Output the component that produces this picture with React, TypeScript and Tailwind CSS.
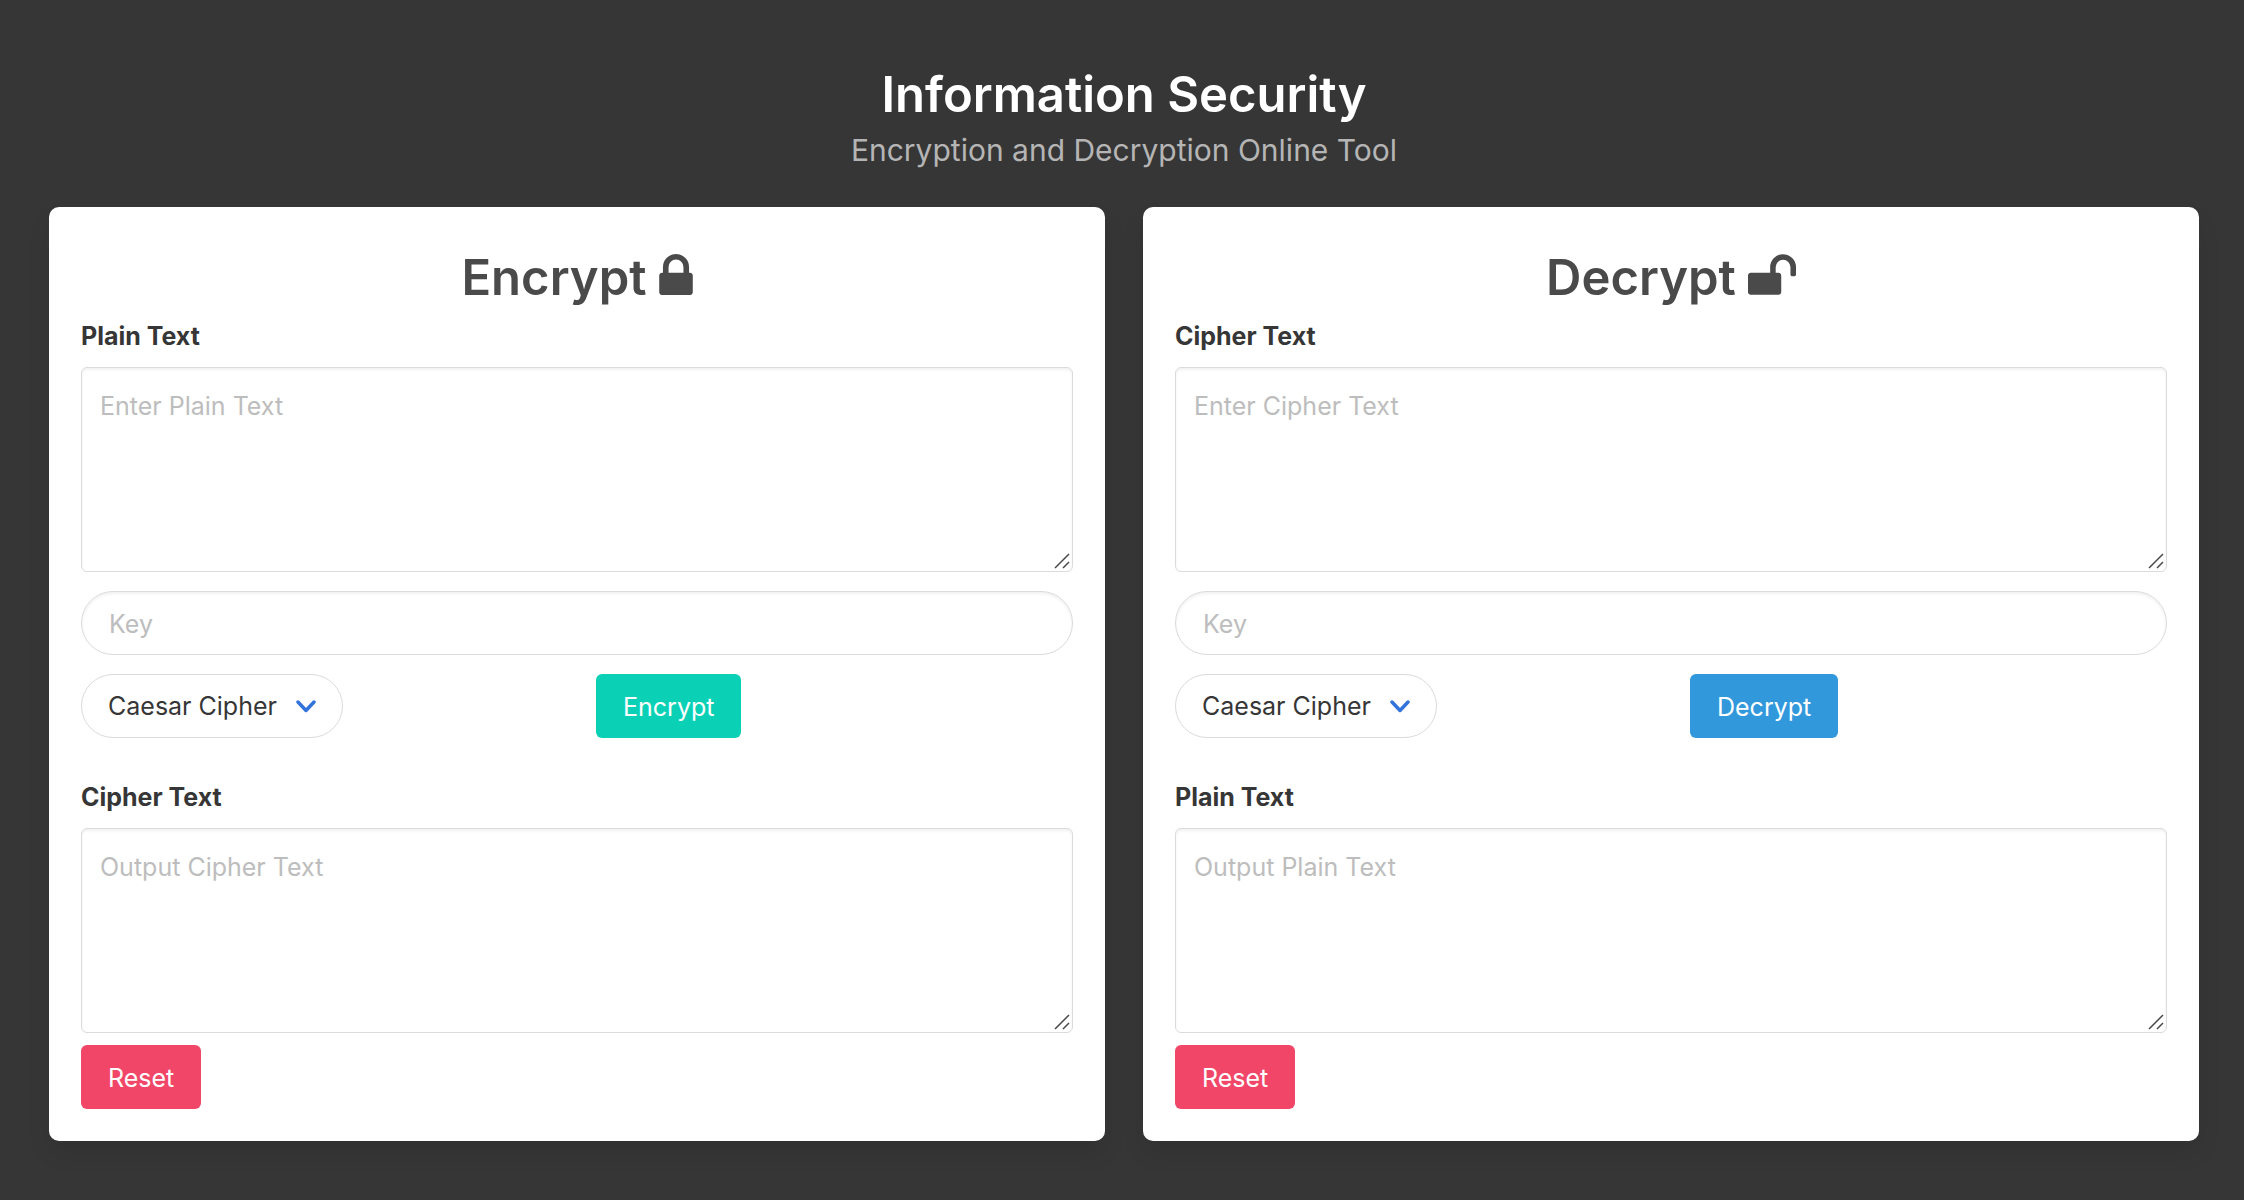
import React, { useId } from "react";

const buttonBase = "h-16 rounded-md px-[27px] pt-0.5 text-[25px] leading-[38px] text-white";

function LockIcon() {
  return (
    <svg viewBox="320 128 1152 1408" className="h-[41px] w-[34px]" fill="currentColor" aria-hidden="true">
      <path d="M640 768h512v-192q0-106-75-181t-181-75-181 75-75 181v192zm832 96v576q0 40-28 68t-68 28h-960q-40 0-68-28t-28-68v-576q0-40 28-68t68-28h32v-192q0-184 132-316t316-132 316 132 132 316v192h32q40 0 68 28t28 68z" />
    </svg>
  );
}

function UnlockIcon() {
  return (
    <svg viewBox="64 128 1664 1408" className="h-[41px] w-12" fill="currentColor" aria-hidden="true">
      <path d="M1728 576v256q0 26-19 45t-45 19h-64q-26 0-45-19t-19-45v-256q0-106-75-181t-181-75-181 75-75 181v192h96q40 0 68 28t28 68v576q0 40-28 68t-68 28h-960q-40 0-68-28t-28-68v-576q0-40 28-68t68-28h672v-192q0-185 131.500-316.500t316.500-131.500 316.500 131.500 131.500 316.500z" />
    </svg>
  );
}

function TextAreaField({ label, placeholder }: { label: string; placeholder: string }) {
  const id = useId();
  return (
    <div className="flex flex-col gap-3">
      <label htmlFor={id} className="text-[25px] leading-[38px] font-bold text-[#363636]">
        {label}
      </label>
      <div className="relative flex">
        <textarea
          id={id}
          placeholder={placeholder}
          className="h-[205px] w-full resize-none rounded-md border border-[#dbdbdb] bg-white px-[18px] py-[19px] text-[25px] leading-[38px] text-[#363636] shadow-[inset_0_2px_3px_rgba(10,10,10,0.06)] outline-none placeholder:text-[#bdbdbd] focus:border-[#3273dc]"
        />
        <svg
          viewBox="0 0 16 16"
          className="pointer-events-none absolute right-[3px] bottom-[3px] size-4"
          fill="none"
          stroke="#4a4a4a"
          strokeWidth="1.500"
          aria-hidden="true"
        >
          <path d="M1 15 15 1M9 15l6-6" />
        </svg>
      </div>
    </div>
  );
}

type PanelProps = {
  title: string;
  icon: React.ReactNode;
  inputLabel: string;
  outputLabel: string;
  action: React.ReactNode;
};

function Panel({ title, icon, inputLabel, outputLabel, action }: PanelProps) {
  return (
    <section className="rounded-[10px] bg-white p-8 shadow-[0_13px_26px_-3px_rgba(10,10,10,0.1)]">
      <form onSubmit={(e) => e.preventDefault()}>
        <h2 className="flex h-[78px] items-baseline justify-center gap-3 pt-[10px] text-[49px] leading-[58px] font-semibold text-[#4a4a4a]">
          {title}
          {icon}
        </h2>
        <TextAreaField label={inputLabel} placeholder={`Enter ${inputLabel}`} />
        <input
          type="text"
          aria-label="Key"
          placeholder="Key"
          className="mt-[19px] block h-16 w-full rounded-full border border-[#dbdbdb] bg-white px-[27px] pt-0.5 text-[25px] text-[#363636] shadow-[inset_0_2px_3px_rgba(10,10,10,0.06)] outline-none placeholder:text-[#bdbdbd] focus:border-[#3273dc]"
        />
        <div className="mt-[19px] mb-10 grid grid-cols-2 gap-[38px]">
          <div className="relative justify-self-start">
            <select
              aria-label="Cipher"
              className="h-16 w-[262px] appearance-none rounded-full border border-[#dbdbdb] bg-white pt-0.5 pr-14 pl-[26px] text-[25px] text-[#363636] outline-none focus:border-[#3273dc]"
            >
              <option>Caesar Cipher</option>
            </select>
            <svg
              viewBox="0 0 20 13"
              className="pointer-events-none absolute top-[26px] right-[27px] h-[13px] w-5"
              fill="none"
              stroke="#3273dc"
              strokeWidth="3.500"
              strokeLinecap="round"
              strokeLinejoin="round"
              aria-hidden="true"
            >
              <path d="M2 2l8 8.500L18 2" />
            </svg>
          </div>
          <div>{action}</div>
        </div>
        <TextAreaField label={outputLabel} placeholder={`Output ${outputLabel}`} />
        <button type="reset" className={`mt-3 block bg-[#f14668] ${buttonBase}`}>
          Reset
        </button>
      </form>
    </section>
  );
}

export default function App() {
  return (
    <main className="min-h-screen bg-[#363636] pt-[66px] pr-[45px] pb-[59px] pl-[49px] font-[Inter,sans-serif]">
      <header className="pb-[37px] text-center">
        <h1 className="text-[49px] leading-[58px] font-semibold text-white">Information Security</h1>
        <p className="mt-1.5 text-[30px] leading-10 text-[#b5b5b5]">Encryption and Decryption Online Tool</p>
      </header>
      <div className="grid grid-cols-2 gap-[38px]">
        <Panel
          title="Encrypt"
          icon={<LockIcon />}
          inputLabel="Plain Text"
          outputLabel="Cipher Text"
          action={
            <button type="submit" className={`bg-[#0ad1b6] ${buttonBase}`}>
              Encrypt
            </button>
          }
        />
        <Panel
          title="Decrypt"
          icon={<UnlockIcon />}
          inputLabel="Cipher Text"
          outputLabel="Plain Text"
          action={
            <button type="submit" className={`bg-[#3298dc] ${buttonBase}`}>
              Decrypt
            </button>
          }
        />
      </div>
    </main>
  );
}
